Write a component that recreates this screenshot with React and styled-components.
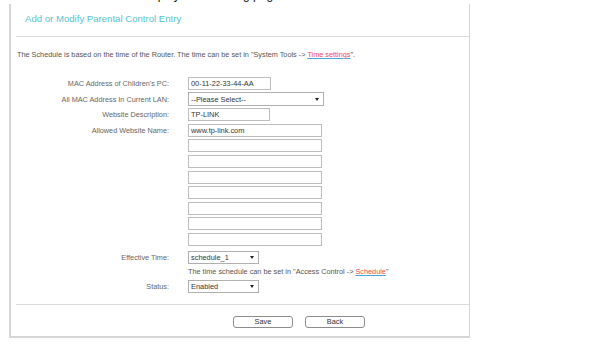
import React from "react";
import styled, { createGlobalStyle } from "styled-components";

const Global = createGlobalStyle`
  body {
    margin: 0;
    background: #fff;
    font-family: "Liberation Sans", Arial, sans-serif;
  }
`;

const Page = styled.div`
  width: 610px;
  height: 345px;
  overflow: hidden;
`;

const Clipped = styled.div`
  height: 4px;
  overflow: hidden;
  padding-left: 39px;
`;

const CutText = styled.div`
  margin-top: -11px;
  font-size: 12px;
  line-height: 12px;
  color: #111;
  white-space: nowrap;
`;

const Panel = styled.div`
  margin-left: 9px;
  width: 461px;
  box-sizing: border-box;
  border-left: 2px solid #d6d6d6;
  border-right: 1px solid #d6d6d6;
  border-bottom: 2px solid #d6d6d6;
`;

const Header = styled.div`
  height: 33px;
  box-sizing: border-box;
  margin-left: 5px;
  padding: 9px 0 0 9px;
  border-bottom: 1px solid #dcdcdc;
`;

const Title = styled.h1`
  margin: 0;
  font-size: 9.6px;
  line-height: 12px;
  font-weight: normal;
  color: #55c3d4;
`;

const Note = styled.p`
  margin: 13px 0 0;
  padding-left: 6px;
  font-size: 7.3px;
  line-height: 10px;
  color: #555;
  white-space: nowrap;
`;

const Link = styled.a`
  color: #f04a4a;
  text-decoration: underline;
  text-decoration-color: #45a9d6;
`;

const Form = styled.div`
  margin-top: 15.7px;
`;

const Row = styled.div`
  display: grid;
  grid-template-columns: 158px 1fr;
  column-gap: 19px;
  align-items: center;
  height: ${(p) => (p.$short ? 14 : 15.6)}px;
  margin-top: ${(p) => p.$gap || 0}px;
`;

const Label = styled.div`
  text-align: right;
  font-size: 7.3px;
  color: #666;
  white-space: nowrap;
`;

const Field = styled.input`
  width: ${(p) => p.$w}px;
  height: 13px;
  box-sizing: border-box;
  border: 1px solid #bdbdbd;
  padding: 0 2px;
  margin: 0;
  font-family: "Liberation Sans", Arial, sans-serif;
  font-size: 7.4px;
  color: #333;
  background: #fff;
  outline: none;
`;

const SelectBox = styled.div`
  width: ${(p) => p.$w}px;
  height: ${(p) => p.$h || 13}px;
  box-sizing: border-box;
  border: 1px solid #b0b0b0;
  padding: 0 4px 0 2px;
  display: flex;
  align-items: center;
  justify-content: space-between;
  font-size: 7.4px;
  color: #333;
  background: #fff;
`;

const Arrow = styled.span`
  width: 0;
  height: 0;
  border-left: 2px solid transparent;
  border-right: 2px solid transparent;
  border-top: 3px solid #222;
`;

const Hint = styled.div`
  font-size: 7.3px;
  color: #555;
  white-space: nowrap;
`;

const Footer = styled.div`
  margin: 9.5px 0 0 5px;
  height: 32px;
  box-sizing: border-box;
  border-top: 1px solid #dcdcdc;
  padding: 11px 0 0 217px;
  display: flex;
  gap: 12px;
`;

const Button = styled.button`
  width: 60px;
  height: 12px;
  padding: 0;
  border: 1px solid #8c8c8c;
  border-radius: 3px;
  background: #fff;
  font-family: "Liberation Sans", Arial, sans-serif;
  font-size: 7.4px;
  line-height: 10px;
  color: #333;
`;

const Select = ({ w, h, children }) => (
  <SelectBox $w={w} $h={h}>
    <span>{children}</span>
    <Arrow />
  </SelectBox>
);

const emptyRows = [1, 2, 3, 4, 5, 6, 7];

export default function App() {
  return (
    <Page>
      <Global />
      <Clipped>
        <CutText>Click Add New... to display the following page.</CutText>
      </Clipped>
      <Panel>
        <Header>
          <Title>Add or Modify Parental Control Entry</Title>
        </Header>
        <Note>
          The Schedule is based on the time of the Router. The time can be set
          in "System Tools -&gt; <Link>Time settings</Link>".
        </Note>
        <Form>
          <Row>
            <Label>MAC Address of Children's PC:</Label>
            <Field $w={83} readOnly defaultValue="00-11-22-33-44-AA" />
          </Row>
          <Row>
            <Label>All MAC Address In Current LAN:</Label>
            <Select w={136} h={14}>--Please Select--</Select>
          </Row>
          <Row>
            <Label>Website Description:</Label>
            <Field $w={82} readOnly defaultValue="TP-LINK" />
          </Row>
          <Row>
            <Label>Allowed Website Name:</Label>
            <Field $w={134} readOnly defaultValue="www.tp-link.com" />
          </Row>
          {emptyRows.map((n) => (
            <Row key={n}>
              <span />
              <Field $w={134} readOnly defaultValue="" />
            </Row>
          ))}
          <Row $gap={2}>
            <Label>Effective Time:</Label>
            <Select w={71}>schedule_1</Select>
          </Row>
          <Row $short>
            <span />
            <Hint>
              The time schedule can be set in "Access Control -&gt;{" "}
              <Link>Schedule</Link>"
            </Hint>
          </Row>
          <Row>
            <Label>Status:</Label>
            <Select w={71}>Enabled</Select>
          </Row>
        </Form>
        <Footer>
          <Button>Save</Button>
          <Button>Back</Button>
        </Footer>
      </Panel>
    </Page>
  );
}
